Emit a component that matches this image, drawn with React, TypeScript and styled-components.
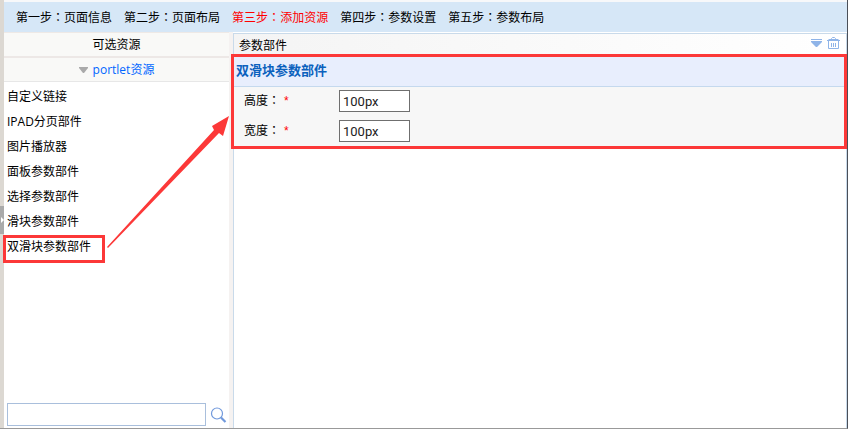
import React from "react";
import styled, { createGlobalStyle } from "styled-components";

const GlobalStyle = createGlobalStyle`
  *, *::before, *::after { box-sizing: border-box; }
  body {
    margin: 0;
    color: #000;
    background: #fff;
    font: 12px/16px "Open Sans", "Noto Sans CJK SC", sans-serif;
  }
  a { color: inherit; text-decoration: none; }
  button, input { font: inherit; }
`;

const Page = styled.div`
  position: relative;
  display: flex;
  min-height: 100vh;
  border-right: 1px solid #4a4f58;
  border-bottom: 1px solid #999;
`;

const Rail = styled.div`
  flex: none;
  display: flex;
  flex-direction: column;
  width: 4px;
  padding-top: 206px;
  background: #dcd8d2;
`;

const RailHandle = styled.button`
  display: flex;
  align-items: center;
  justify-content: flex-end;
  width: 4px;
  height: 28px;
  padding: 0;
  border: 0;
  background: #aaa;
`;

const Content = styled.div`
  flex: 1;
  min-width: 0;
  display: flex;
  flex-direction: column;
`;

const Steps = styled.nav`
  display: flex;
  gap: 12px;
  height: 32px;
  padding: 8px 12px 0;
  border-top: 2px solid #f7f8fa;
  background: #d6e7f7;
  white-space: nowrap;
`;

const Step = styled.a<{ $current?: boolean }>`
  color: ${(p) => (p.$current ? "#f00" : "#000")};
`;

const Colon = styled.span`
  font-family: "Noto Sans CJK TC", sans-serif;
  line-height: 1;
`;

const Columns = styled.div`
  flex: 1;
  display: flex;
`;

const Sidebar = styled.aside`
  flex: none;
  display: flex;
  flex-direction: column;
  width: 229px;
  border-right: 4px solid #f5f2f1;
`;

const SidebarTitle = styled.h2`
  height: 26px;
  margin: 0;
  padding-top: 4px;
  border-top: 1px solid #eee9e6;
  border-bottom: 2px solid #ede8e6;
  background: #f9f9f7;
  font-size: 12px;
  font-weight: 400;
  line-height: 16px;
  text-align: center;
`;

const GroupToggle = styled.button`
  display: flex;
  align-items: center;
  justify-content: center;
  gap: 5px;
  height: 24px;
  padding: 0;
  border: 0;
  border-bottom: 1px solid #e7e7e7;
  background: #f9f9f7;
  color: #06f;
`;

const ResourceList = styled.ul`
  flex: 1;
  margin: 0;
  padding: 3px 0 0;
  list-style: none;
`;

const Resource = styled.li`
  height: 25px;
  padding: 4px 3px 0;
`;

const Marked = styled.a`
  position: relative;
  &::after {
    content: "";
    position: absolute;
    inset: -3px -14px -8px -4px;
    border: 3px solid #fc3838;
    pointer-events: none;
  }
`;

const SearchBar = styled.form`
  display: flex;
  align-items: center;
  gap: 4px;
  padding: 0 2px 2px 3px;
`;

const SearchInput = styled.input`
  flex: 1;
  min-width: 0;
  height: 23px;
  padding: 0 4px;
  border: 1px solid #a9bfdc;
`;

const IconButton = styled.button`
  display: flex;
  padding: 0;
  border: 0;
  background: none;
`;

const Main = styled.main`
  flex: 1;
  min-width: 0;
  margin-top: 1px;
  border: 1px solid #c9daea;
  border-bottom: 0;
`;

const PanelHeader = styled.header`
  display: flex;
  align-items: center;
  justify-content: space-between;
  height: 20px;
  padding: 0 6px 0 5px;
  background: linear-gradient(90deg, #f4f4f4, #fff);
`;

const PanelTitle = styled.h2`
  margin: 0;
  padding-top: 3px;
  font-size: 12px;
  font-weight: 400;
  line-height: 16px;
`;

const Actions = styled.div`
  display: flex;
  align-items: center;
  gap: 5px;
  padding-bottom: 2px;
`;

const Portlet = styled.section`
  margin: 0 -1px 0 -3px;
  border: 3px solid #fc3838;
  background: #f7f7f7;
`;

const PortletTitle = styled.h3`
  height: 30px;
  margin: 0;
  padding: 4px 2px 0;
  border-bottom: 1px solid #c5d9ee;
  background: #e8eefd;
  color: #0b61bd;
  font-size: 13px;
  font-weight: 700;
  line-height: 18px;
`;

const Fields = styled.div`
  display: flex;
  flex-direction: column;
  gap: 8px;
  padding: 3px 10px 4px;
`;

const Field = styled.label`
  display: flex;
  align-items: center;
`;

const FieldName = styled.span`
  width: 95px;
`;

const Required = styled.span`
  margin-left: 4px;
  color: #f00;
  font-family: "Liberation Sans", sans-serif;
`;

const FieldInput = styled.input`
  width: 71px;
  height: 22px;
  padding: 0 3px;
  border: 1px solid #6f6f6f;
  background: #fff;
  color: #222;
  font: 13px Roboto, sans-serif;
`;

const Arrow = styled.svg`
  position: absolute;
  top: 116px;
  left: 107px;
  pointer-events: none;
`;

const steps = [
  ["第一步", "页面信息"],
  ["第二步", "页面布局"],
  ["第三步", "添加资源"],
  ["第四步", "参数设置"],
  ["第五步", "参数布局"],
];

const resources = [
  "自定义链接",
  "IPAD分页部件",
  "图片播放器",
  "面板参数部件",
  "选择参数部件",
  "滑块参数部件",
];

const SizeField = ({ name }: { name: string }) => (
  <Field>
    <FieldName>
      {name}
      <Colon>：</Colon>
      <Required>*</Required>
    </FieldName>
    <FieldInput type="text" defaultValue="100px" />
  </Field>
);

export default function App() {
  return (
    <>
      <GlobalStyle />
      <Page>
        <Rail>
          <RailHandle type="button" aria-label="展开">
            <svg width="3" height="6" viewBox="0 0 3 6">
              <path d="M0 0L3 3L0 6Z" fill="#fff" />
            </svg>
          </RailHandle>
        </Rail>
        <Content>
          <Steps>
            {steps.map(([step, name], i) => (
              <Step key={step} href="#" $current={i === 2}>
                {step}
                <Colon>：</Colon>
                {name}
              </Step>
            ))}
          </Steps>
          <Columns>
            <Sidebar>
              <SidebarTitle>可选资源</SidebarTitle>
              <GroupToggle type="button">
                <svg width="9" height="6" viewBox="0 0 9 6">
                  <path d="M0 0H9V1L5 6H4L0 1Z" fill="#aaa" />
                </svg>
                portlet资源
              </GroupToggle>
              <ResourceList>
                {resources.map((name) => (
                  <Resource key={name}>
                    <a href="#">{name}</a>
                  </Resource>
                ))}
                <Resource>
                  <Marked href="#">双滑块参数部件</Marked>
                </Resource>
              </ResourceList>
              <SearchBar>
                <SearchInput type="text" aria-label="搜索资源" />
                <IconButton type="button" aria-label="搜索">
                  <svg width="17" height="17" viewBox="0 0 17 17" fill="none" stroke="#7199dc">
                    <circle cx="7" cy="7.5" r="5.5" strokeWidth="1.2" />
                    <path d="M11 11.5L15.5 16" strokeWidth="2.2" />
                  </svg>
                </IconButton>
              </SearchBar>
            </Sidebar>
            <Main>
              <PanelHeader>
                <PanelTitle>参数部件</PanelTitle>
                <Actions>
                  <IconButton type="button" aria-label="折叠">
                    <svg width="11" height="8" viewBox="0 0 11 8" fill="#8fb4e8">
                      <path d="M0 0H11V1H0ZM0 2H11V3L6 8H5L0 3Z" />
                    </svg>
                  </IconButton>
                  <IconButton type="button" aria-label="删除">
                    <svg width="13" height="12" viewBox="0 0 13 12" fill="none" stroke="#8fb4e8">
                      <path d="M0 3.5H13M1.5 2.5H11.5M4.5 2V1.5L5.5 0.5H7.5L8.5 1.5V2M1.5 4V11.5H11.5V4M4.5 6V10M6.5 6V10M8.5 6V10" />
                    </svg>
                  </IconButton>
                </Actions>
              </PanelHeader>
              <Portlet>
                <PortletTitle>双滑块参数部件</PortletTitle>
                <Fields>
                  <SizeField name="高度" />
                  <SizeField name="宽度" />
                </Fields>
              </Portlet>
            </Main>
          </Columns>
        </Content>
        <Arrow width="122" height="132" viewBox="0 0 122 132">
          <path
            d="M0 131L107 14L105 10L122 0L116 20L112 17L1 132Z"
            fill="#fc3838"
          />
        </Arrow>
      </Page>
    </>
  );
}
